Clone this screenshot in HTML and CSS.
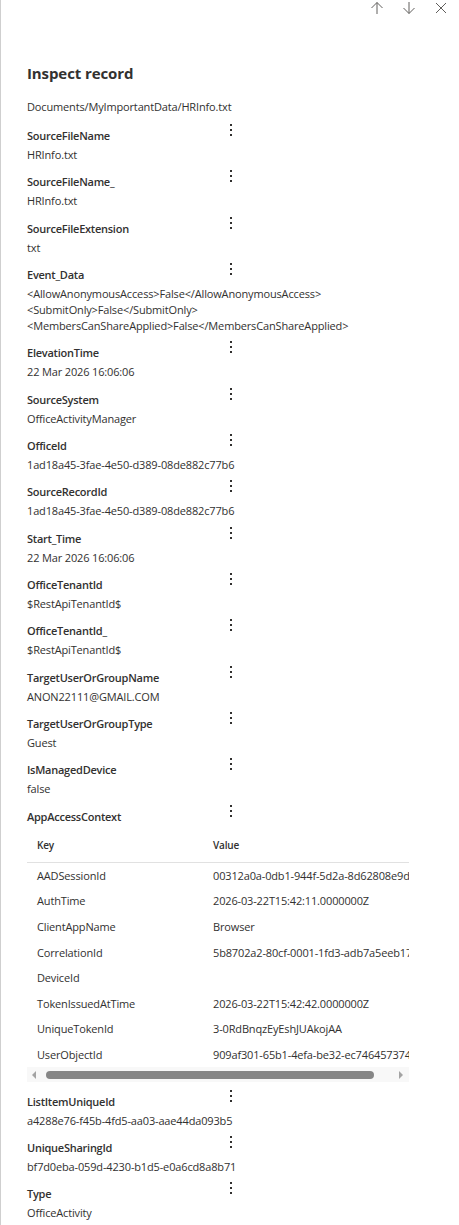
FILE: index.html
```html
<!DOCTYPE html>
<html lang="en">
<head>
<meta charset="utf-8">
<title>Inspect record</title>
<link rel="stylesheet" href="styles.css">
</head>
<body>
<div class="panel">
  <div class="toolbar">
    <button class="icon-btn" aria-label="Previous"><svg width="14" height="14" viewBox="0 0 14 14"><path d="M7 13V1.5M1.5 7L7 1.5L12.5 7" fill="none" stroke="#605e5c" stroke-width="1"/></svg></button>
    <button class="icon-btn" aria-label="Next"><svg width="14" height="14" viewBox="0 0 14 14"><path d="M7 1V12.5M1.5 7L7 12.5L12.5 7" fill="none" stroke="#605e5c" stroke-width="1"/></svg></button>
    <button class="icon-btn" aria-label="Close"><svg width="14" height="14" viewBox="0 0 14 14"><path d="M2 2L12 12M12 2L2 12" fill="none" stroke="#605e5c" stroke-width="1"/></svg></button>
  </div>
  <h1 class="title">Inspect record</h1>
  <div class="path">Documents/MyImportantData/HRInfo.txt</div>

  <div class="fields">
    <div class="field"><div class="field-head"><span class="label">SourceFileName</span><span class="kebab"><i></i><i></i><i></i></span></div><div class="value">HRInfo.txt</div></div>
    <div class="field"><div class="field-head"><span class="label">SourceFileName_</span><span class="kebab"><i></i><i></i><i></i></span></div><div class="value">HRInfo.txt</div></div>
    <div class="field"><div class="field-head"><span class="label">SourceFileExtension</span><span class="kebab"><i></i><i></i><i></i></span></div><div class="value">txt</div></div>
    <div class="field"><div class="field-head"><span class="label">Event_Data</span><span class="kebab"><i></i><i></i><i></i></span></div><div class="value">&lt;AllowAnonymousAccess&gt;False&lt;/AllowAnonymousAccess&gt;<br>&lt;SubmitOnly&gt;False&lt;/SubmitOnly&gt;<br>&lt;MembersCanShareApplied&gt;False&lt;/MembersCanShareApplied&gt;</div></div>
    <div class="field"><div class="field-head"><span class="label">ElevationTime</span><span class="kebab"><i></i><i></i><i></i></span></div><div class="value">22 Mar 2026 16:06:06</div></div>
    <div class="field"><div class="field-head"><span class="label">SourceSystem</span><span class="kebab"><i></i><i></i><i></i></span></div><div class="value">OfficeActivityManager</div></div>
    <div class="field"><div class="field-head"><span class="label">OfficeId</span><span class="kebab"><i></i><i></i><i></i></span></div><div class="value">1ad18a45-3fae-4e50-d389-08de882c77b6</div></div>
    <div class="field"><div class="field-head"><span class="label">SourceRecordId</span><span class="kebab"><i></i><i></i><i></i></span></div><div class="value">1ad18a45-3fae-4e50-d389-08de882c77b6</div></div>
    <div class="field"><div class="field-head"><span class="label">Start_Time</span><span class="kebab"><i></i><i></i><i></i></span></div><div class="value">22 Mar 2026 16:06:06</div></div>
    <div class="field"><div class="field-head"><span class="label">OfficeTenantId</span><span class="kebab"><i></i><i></i><i></i></span></div><div class="value">$RestApiTenantId$</div></div>
    <div class="field"><div class="field-head"><span class="label">OfficeTenantId_</span><span class="kebab"><i></i><i></i><i></i></span></div><div class="value">$RestApiTenantId$</div></div>
    <div class="field"><div class="field-head"><span class="label">TargetUserOrGroupName</span><span class="kebab"><i></i><i></i><i></i></span></div><div class="value">ANON22111@GMAIL.COM</div></div>
    <div class="field"><div class="field-head"><span class="label">TargetUserOrGroupType</span><span class="kebab"><i></i><i></i><i></i></span></div><div class="value">Guest</div></div>
    <div class="field"><div class="field-head"><span class="label">IsManagedDevice</span><span class="kebab"><i></i><i></i><i></i></span></div><div class="value">false</div></div>
    <div class="field"><div class="field-head"><span class="label">AppAccessContext</span><span class="kebab"><i></i><i></i><i></i></span></div>
      <div class="kv">
        <div class="kv-scroll">
          <div class="kv-inner">
            <div class="kv-row kv-header"><span class="k">Key</span><span class="v">Value</span></div>
            <div class="kv-row"><span class="k">AADSessionId</span><span class="v">00312a0a-0db1-944f-5d2a-8d62808e9d1c</span></div>
            <div class="kv-row"><span class="k">AuthTime</span><span class="v">2026-03-22T15:42:11.0000000Z</span></div>
            <div class="kv-row"><span class="k">ClientAppName</span><span class="v">Browser</span></div>
            <div class="kv-row"><span class="k">CorrelationId</span><span class="v">5b8702a2-80cf-0001-1fd3-adb7a5eeb17c</span></div>
            <div class="kv-row"><span class="k">DeviceId</span><span class="v"></span></div>
            <div class="kv-row"><span class="k">TokenIssuedAtTime</span><span class="v">2026-03-22T15:42:42.0000000Z</span></div>
            <div class="kv-row"><span class="k">UniqueTokenId</span><span class="v">3-0RdBnqzEyEshJUAkojAA</span></div>
            <div class="kv-row"><span class="k">UserObjectId</span><span class="v">909af301-65b1-4efa-be32-ec7464573741</span></div>
          </div>
        </div>
        <div class="hscroll">
          <span class="arrow-left"></span>
          <span class="track"><span class="thumb"></span></span>
          <span class="arrow-right"></span>
        </div>
      </div>
    </div>
    <div class="field"><div class="field-head"><span class="label">ListItemUniqueId</span><span class="kebab"><i></i><i></i><i></i></span></div><div class="value">a4288e76-f45b-4fd5-aa03-aae44da093b5</div></div>
    <div class="field"><div class="field-head"><span class="label">UniqueSharingId</span><span class="kebab"><i></i><i></i><i></i></span></div><div class="value">bf7d0eba-059d-4230-b1d5-e0a6cd8a8b71</div></div>
    <div class="field"><div class="field-head"><span class="label">Type</span><span class="kebab"><i></i><i></i><i></i></span></div><div class="value">OfficeActivity</div></div>
  </div>
</div>
</body>
</html>
```

FILE: styles.css
```css
html, body {
  margin: 0;
  padding: 0;
  background: #ffffff;
}
body {
  font-family: "Open Sans", "Noto Sans", "Liberation Sans", sans-serif;
  color: #323130;
  font-size: 11px;
  letter-spacing: -0.15px;
}
.panel {
  border-left: 1px solid #cfcfcf;
  min-height: 1225px;
  box-sizing: border-box;
  padding-left: 26px;
}
.toolbar {
  display: flex;
  justify-content: flex-end;
  padding-right: 2px;
  height: 16px;
}
.icon-btn {
  width: 32px;
  height: 16px;
  border: 0;
  background: transparent;
  padding: 0;
  display: flex;
  align-items: center;
  justify-content: center;
}
.icon-btn svg { display: block; }
.title {
  margin: 46px 0 0 0;
  font-size: 15px;
  line-height: 22px;
  font-weight: 700;
  letter-spacing: -0.1px;
  color: #323130;
}
.path {
  margin-top: 15px;
  line-height: 16px;
}
.fields {
  margin-top: 9px;
  display: flex;
  flex-direction: column;
  gap: 7.33px;
}
.field-head {
  display: flex;
  align-items: flex-start;
  height: 20px;
}
.label {
  width: 202px;
  padding-top: 4px;
  line-height: 16px;
  font-weight: 600;
  letter-spacing: -0.25px;
  white-space: nowrap;
}
.kebab {
  display: flex;
  flex-direction: column;
  gap: 3px;
  width: 4px;
  align-items: center;
}
.kebab i {
  display: block;
  width: 2px;
  height: 2px;
  background: #323130;
}
.value {
  margin-top: 3px;
  line-height: 16px;
  white-space: nowrap;
}
.kv {
  margin-top: 3px;
  width: 382px;
}
.kv-scroll {
  overflow: hidden;
}
.kv-inner {
  width: 440px;
}
.kv-row {
  display: flex;
  height: 25.6px;
  align-items: center;
  white-space: nowrap;
}
.kv-header {
  height: 34px;
  border-bottom: 1px solid #e1e1e1;
  font-size: 10px;
  font-weight: 600;
}
.k {
  width: 176px;
  padding-left: 10px;
  flex: none;
}
.v {
  flex: none;
}
.hscroll {
  display: flex;
  align-items: center;
  height: 15px;
  background: #f8f8f8;
}
.arrow-left, .arrow-right {
  width: 0;
  height: 0;
  border-top: 4px solid transparent;
  border-bottom: 4px solid transparent;
  flex: none;
}
.arrow-left {
  border-right: 4px solid #a3a3a3;
  margin: 0 10px 0 5px;
}
.arrow-right {
  border-left: 4px solid #a3a3a3;
  margin: 0 6px 0 25px;
}
.track {
  flex: 1;
  display: flex;
}
.thumb {
  display: block;
  width: 100%;
  height: 8px;
  border-radius: 4px;
  background: #868686;
}
```
